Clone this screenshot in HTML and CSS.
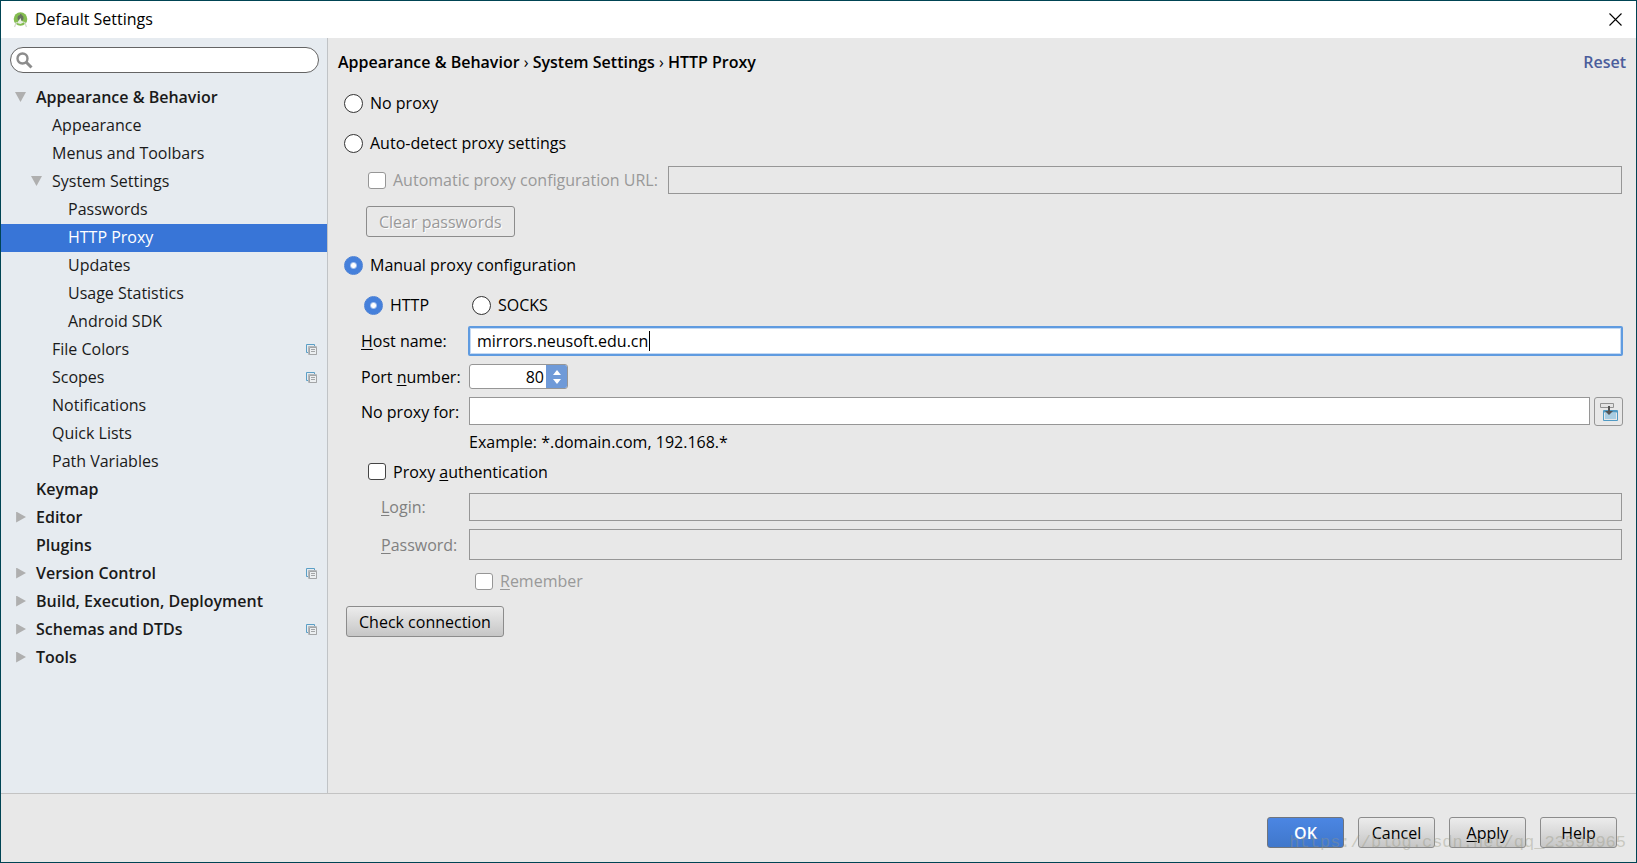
FILE: index.html
```html
<!DOCTYPE html>
<html lang="en">
  <head>
    <meta charset="UTF-8" />
    <meta name="viewport" content="width=device-width, initial-scale=1.0" />
    <title>Default Settings</title>
    <link rel="stylesheet" href="styles.css">
  </head>
  <body>
    <svg class="defs" width="0" height="0" aria-hidden="true">
      <symbol id="copy" viewBox="0 0 11 11">
        <path d="M2 8.5H.5V.5h8V2" fill="none" stroke="#5b9fc6" />
        <path d="M2.5 2.5h8v8h-8z" fill="#e6ebf0" stroke="#b4b8bb" />
        <path d="M3.500 3.500h7v7h-7z" fill="#eceff1" stroke="#a3a5a7" />
        <path d="M5 5.500h4M5 7.500h4" stroke="#a3a5a7" />
      </symbol>
    </svg>

    <header class="titlebar">
      <svg class="app-icon" width="15" height="16" viewBox="0 0 15 16">
        <circle cx="7.5" cy="7" r="6.8" fill="#84bd50" />
        <circle cx="7.5" cy="6" r="3" fill="#66735f" />
        <path d="M7 2h1.500v2H7z" fill="#66735f" />
        <path d="M4 11l3.500-5 1 3 3 1-4 2z" fill="#e9efe4" />
        <path d="M3.500 10L1.500 15M11.500 10l2 5" stroke="#d5dbd0" stroke-width="1.300" />
      </svg>
      <span class="window-title">Default Settings</span>
      <button class="close" type="button" aria-label="Close">
        <svg width="13" height="13" viewBox="0 0 13 13"><path d="M.5.5l12 12M12.5.5l-12 12" stroke="#000" stroke-width="1.1" /></svg>
      </button>
    </header>

    <div class="content">
      <nav class="sidebar">
        <label class="search">
          <svg width="17" height="17" viewBox="0 0 17 17">
            <circle cx="6.5" cy="6.5" r="5" fill="none" stroke="#8c8c8c" stroke-width="2.4" />
            <path d="M10 10l5.500 5.500" stroke="#8c8c8c" stroke-width="3" />
          </svg>
          <input type="search" aria-label="Search settings" />
        </label>

        <ul class="tree">
          <li>
            <a class="group open" href="#">Appearance &amp; Behavior</a>
            <ul>
              <li><a href="#">Appearance</a></li>
              <li><a href="#">Menus and Toolbars</a></li>
              <li>
                <a class="open" href="#">System Settings</a>
                <ul>
                  <li><a href="#">Passwords</a></li>
                  <li><a class="selected" href="#">HTTP Proxy</a></li>
                  <li><a href="#">Updates</a></li>
                  <li><a href="#">Usage Statistics</a></li>
                  <li><a href="#">Android SDK</a></li>
                </ul>
              </li>
              <li><a href="#">File Colors <svg class="copy"><use href="#copy" /></svg></a></li>
              <li><a href="#">Scopes <svg class="copy"><use href="#copy" /></svg></a></li>
              <li><a href="#">Notifications</a></li>
              <li><a href="#">Quick Lists</a></li>
              <li><a href="#">Path Variables</a></li>
            </ul>
          </li>
          <li><a class="group" href="#">Keymap</a></li>
          <li><a class="group closed" href="#">Editor</a></li>
          <li><a class="group" href="#">Plugins</a></li>
          <li><a class="group closed" href="#">Version Control <svg class="copy"><use href="#copy" /></svg></a></li>
          <li><a class="group closed" href="#">Build, Execution, Deployment</a></li>
          <li><a class="group closed" href="#">Schemas and DTDs <svg class="copy"><use href="#copy" /></svg></a></li>
          <li><a class="group closed" href="#">Tools</a></li>
        </ul>
      </nav>

      <main class="panel">
        <div class="panel-head">
          <h1>Appearance &amp; Behavior <span>›</span> System Settings <span>›</span> HTTP Proxy</h1>
          <a class="reset" href="#">Reset</a>
        </div>

        <form class="proxy" id="proxy">
          <label class="radio"><input type="radio" name="mode" />No proxy</label>
          <label class="radio"><input type="radio" name="mode" />Auto-detect proxy settings</label>
          <div class="auto-url">
            <label class="check disabled"><input type="checkbox" disabled />Automatic proxy configuration URL:</label>
            <input class="field" type="text" aria-label="Automatic proxy configuration URL" disabled />
          </div>
          <button class="btn clear" type="button" disabled>Clear passwords</button>

          <label class="radio"><input type="radio" name="mode" checked />Manual proxy configuration</label>
          <div class="kinds">
            <label class="radio"><input type="radio" name="kind" checked />HTTP</label>
            <label class="radio"><input type="radio" name="kind" />SOCKS</label>
          </div>

          <div class="fields">
            <label for="host"><u>H</u>ost name:</label>
            <div class="host">
              <input class="field" id="host" type="text" value="mirrors.neusoft.edu.cn" spellcheck="false" />
            </div>

            <label for="port">Port <u>n</u>umber:</label>
            <div class="spinner">
              <input id="port" type="text" inputmode="numeric" value="80" />
              <div class="steps">
                <button type="button" aria-label="Increase"><svg width="8" height="5" viewBox="0 0 8 5"><path d="M0 5l4-5 4 5z" fill="#fff" /></svg></button>
                <button type="button" aria-label="Decrease"><svg width="8" height="5" viewBox="0 0 8 5"><path d="M0 0l4 5 4-5z" fill="#fff" /></svg></button>
              </div>
            </div>

            <label for="bypass">No proxy for:</label>
            <div class="bypass">
              <input class="field" id="bypass" type="text" />
              <button class="expand" type="button" aria-label="Edit list">
                <svg width="18" height="18" viewBox="0 0 18 18">
                  <path d="M3.5 7.5h14v10h-14z" fill="#e8e8e8" stroke="#509ac4" />
                  <path d="M4 8.500h13" stroke="#509ac4" stroke-width="2" />
                  <path d="M5 10h11v6H5z" fill="#a9cde2" />
                  <path d="M.5.5h13v4H.5z" fill="#e4e4e4" stroke="#929292" />
                  <path d="M8 3h2v5h3l-4 4-4-4h3z" fill="#555" />
                </svg>
              </button>
            </div>

            <div class="hint">Example: *.domain.com, 192.168.*</div>

            <label class="check auth"><input type="checkbox" /><span>Proxy <u>a</u>uthentication</span></label>

            <label class="sub" for="login"><u>L</u>ogin:</label>
            <input class="field" id="login" type="text" disabled />

            <label class="sub" for="password"><u>P</u>assword:</label>
            <input class="field password" id="password" type="password" disabled />

            <label class="check remember disabled"><input type="checkbox" disabled /><span><u>R</u>emember</span></label>
          </div>

          <button class="btn test" type="button">Check connection</button>
        </form>
      </main>
    </div>

    <footer class="buttons">
      <button class="btn primary" type="submit" form="proxy">OK</button>
      <button class="btn" type="button">Cancel</button>
      <button class="btn" type="button"><u>A</u>pply</button>
      <button class="btn" type="button">Help</button>
      <span class="watermark">https://blog.csdn.net/qq_23599965</span>
    </footer>
  </body>
</html>
```

FILE: styles.css
```css
* {
  box-sizing: border-box;
}

body {
  display: flex;
  flex-direction: column;
  min-height: 100vh;
  margin: 0;
  border: 1px solid #004454;
  background-color: #e8e8e8;
  color: #000;
  font: 16px/20px "Open Sans", "Noto Sans", sans-serif;
}

input,
button {
  margin: 0;
  font: inherit;
  color: inherit;
}

a {
  color: inherit;
  text-decoration: none;
}

u {
  text-underline-offset: 2px;
}

.defs {
  position: absolute;
}

/* title bar */
.titlebar {
  display: flex;
  align-items: center;
  height: 37px;
  padding: 0 14px 0 12px;
  background-color: #fff;
}

.window-title {
  flex: 1;
  margin-left: 7px;
  padding-bottom: 2px;
}

.close {
  display: flex;
  padding: 0;
  border: 0;
  background: none;
}

.content {
  display: flex;
  flex: 1;
}

/* settings tree */
.sidebar {
  flex: none;
  width: 327px;
  border-right: 1px solid #c0c3c6;
  background-color: #e6ebf0;
}

.search {
  display: flex;
  align-items: center;
  height: 26px;
  margin: 9px 8px 11px 9px;
  padding: 0 12px 0 5px;
  border: 1px solid #646464;
  border-radius: 13px;
  background-color: #fff;
}

.search input {
  flex: 1;
  min-width: 0;
  border: 0;
  outline: 0;
  background: none;
}

.tree,
.tree ul {
  margin: 0;
  padding: 0;
  list-style: none;
}

.tree a {
  display: flex;
  align-items: center;
  height: 28px;
  padding: 0 10px 2px 51px;
  color: #1a1a1a;
}

.tree ul ul a {
  padding-left: 67px;
}

.tree .group {
  padding-left: 35px;
  font-weight: 600;
}

.tree .selected {
  background-color: #3875d7;
  color: #fff;
}

.open::before,
.closed::before {
  content: "";
  width: 11px;
  height: 10px;
  margin: 0 10px 0 -21px;
  background-color: #afafaf;
  clip-path: polygon(0 0, 100% 0, 50% 100%);
}

.closed::before {
  height: 11px;
  clip-path: polygon(10% 0, 100% 50%, 10% 100%);
}

.copy {
  width: 11px;
  height: 11px;
  margin-left: auto;
}

/* proxy panel */
.panel {
  flex: 1;
  min-width: 0;
  padding: 0 14px 0 10px;
}

.panel-head {
  display: flex;
  align-items: center;
  justify-content: space-between;
  height: 45px;
  margin-right: -4px;
  padding-top: 2px;
}

h1 {
  margin: 0;
  font-size: 16px;
  font-weight: 600;
}

h1 span {
  font-weight: normal;
}

.reset {
  color: #4b5d9b;
  font-weight: 600;
}

.proxy {
  display: flex;
  flex-direction: column;
}

.radio {
  display: flex;
  align-items: center;
  gap: 7px;
  height: 40px;
  padding-left: 6px;
}

.radio input {
  appearance: none;
  width: 19px;
  height: 19px;
  border: 1px solid #333;
  border-radius: 50%;
  background-color: #fff;
}

.radio input:checked {
  border-color: #4a80d6;
  background: radial-gradient(circle, #fff 2px, #4580db 4px);
}

.check {
  display: flex;
  align-items: center;
  gap: 7px;
}

.check input {
  appearance: none;
  width: 18px;
  height: 17px;
  border: 1px solid #444;
  border-radius: 3px;
  background-color: #fff;
}

.check input:disabled {
  border-color: #969696;
}

.disabled {
  color: #999;
}

.field {
  flex: 1;
  width: 100%;
  min-width: 0;
  height: 28px;
  padding: 0 7px;
  border: 1px solid #969696;
  border-radius: 0;
  outline: 0;
  background-color: #fff;
}

.field:disabled {
  background-color: #e8e8e8;
}

.auto-url {
  display: flex;
  align-items: center;
  gap: 10px;
  height: 34px;
  padding-left: 30px;
}

.btn {
  height: 31px;
  min-width: 77px;
  padding: 0 10px;
  border: 1px solid #8c8c8c;
  border-radius: 3px;
  background: linear-gradient(#ececec, #c6c6c6);
}

.btn:disabled {
  background: none;
  color: #999;
  text-shadow: 1px 1px #fff;
}

.clear {
  align-self: flex-start;
  margin: 9px 0 8px 28px;
}

.kinds {
  display: grid;
  grid-template-columns: 108px 1fr;
  padding-left: 20px;
}

.fields {
  display: grid;
  grid-template-columns: 108px 1fr;
  gap: 8px 0;
  align-items: center;
  padding: 1px 0 0 23px;
}

/* active field with its caret */
.host {
  position: relative;
  margin: 0 -1px;
}

.host .field {
  height: 30px;
  border: 2px solid #5f9be0;
  border-radius: 2px;
  box-shadow: inset 0 0 0 1px #c4d9f3;
}

.host::after {
  content: "";
  position: absolute;
  top: 5px;
  left: 181px;
  width: 1px;
  height: 20px;
  background-color: #000;
}

.host:focus-within::after {
  display: none;
}

.spinner {
  display: flex;
  width: 99px;
  height: 25px;
  border: 1px solid #969696;
  border-radius: 3px;
  overflow: hidden;
  background-color: #fff;
}

.spinner input {
  flex: 1;
  min-width: 0;
  padding: 0 2px;
  border: 0;
  outline: 0;
  background: none;
  text-align: right;
}

.steps {
  display: flex;
  flex-direction: column;
  justify-content: center;
  gap: 4px;
  width: 21px;
  background-color: #6f9ad8;
}

.steps button {
  display: flex;
  justify-content: center;
  padding: 0;
  border: 0;
  background: none;
}

.bypass {
  display: flex;
  gap: 4px;
  margin-right: -1px;
}

.expand {
  display: flex;
  align-items: center;
  justify-content: center;
  width: 29px;
  height: 29px;
  padding: 0;
  border: 1px solid #969696;
  border-radius: 3px;
  background-color: #e8e8e8;
}

.hint {
  grid-column: 2;
  line-height: 16px;
}

.auth {
  grid-column: 1 / -1;
  height: 27px;
  padding-left: 7px;
}

.sub {
  padding-left: 20px;
  color: #808080;
}

.password {
  height: 31px;
}

.remember {
  grid-column: 2;
  height: 26px;
  padding-left: 6px;
}

.clear,
.test {
  padding: 0 12px;
}

.test {
  align-self: flex-start;
  margin: 12px 0 0 8px;
}

/* bottom buttons */
.buttons {
  position: relative;
  display: flex;
  justify-content: flex-end;
  gap: 14px;
  padding: 23px 19px 14px;
  border-top: 1px solid #c3c3c3;
}

.primary {
  border-color: #70757d;
  background: linear-gradient(#4b86e3, #4077cb);
  color: #fff;
  font-weight: 600;
}

.watermark {
  position: absolute;
  right: 10px;
  bottom: 9px;
  color: rgba(150, 150, 130, 0.4);
  font: 17px/20px "Liberation Mono", monospace;
  pointer-events: none;
}
```
